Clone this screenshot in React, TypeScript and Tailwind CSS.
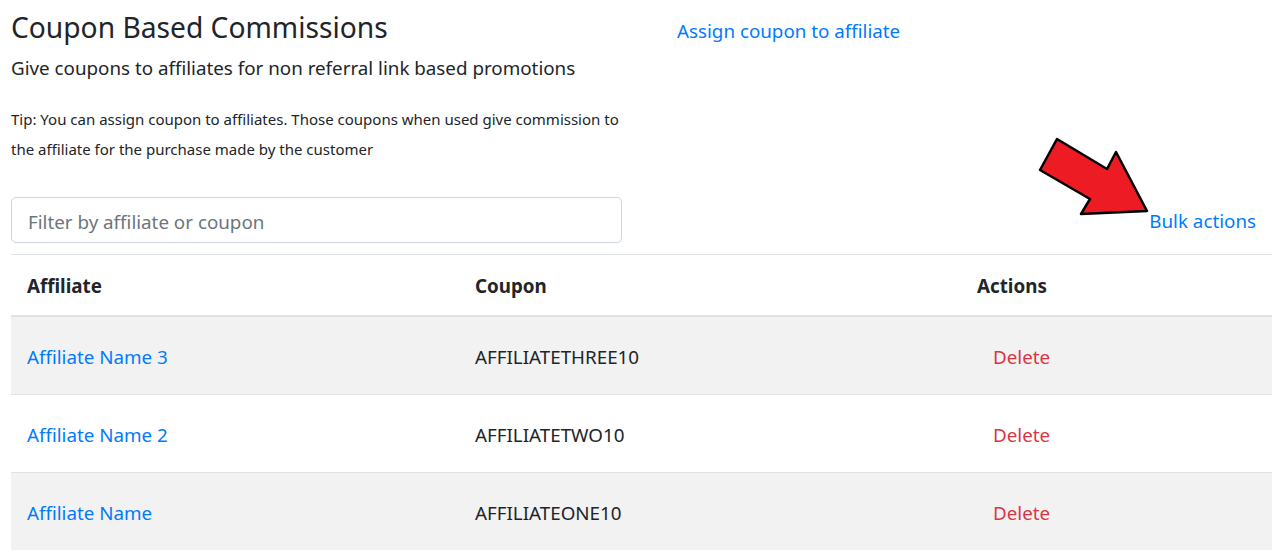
import React, { useState } from "react";

const rows = [
  { name: "Affiliate Name 3", coupon: "AFFILIATETHREE10" },
  { name: "Affiliate Name 2", coupon: "AFFILIATETWO10" },
  { name: "Affiliate Name", coupon: "AFFILIATEONE10" },
];

function Arrow() {
  return (
    <svg
      className="absolute left-[1030px] top-[130px] pointer-events-none"
      width="130"
      height="95"
      viewBox="1030 130 130 95"
    >
      <polygon
        points="1040,170 1057,139 1107,169 1116,152 1147,211 1081,214 1090,199"
        fill="#ed1c24"
        stroke="#000"
        strokeWidth="2.5"
        strokeLinejoin="round"
      />
    </svg>
  );
}

function App() {
  const [filter, setFilter] = useState("");

  const visible = rows.filter(
    (r) =>
      r.name.toLowerCase().includes(filter.toLowerCase()) ||
      r.coupon.toLowerCase().includes(filter.toLowerCase())
  );

  return (
    <div
      className="relative min-h-screen bg-white text-[#212529] px-[11px] pt-[6px]"
      style={{ fontFamily: '"Noto Sans", sans-serif' }}
    >
      <div className="flex">
        <div className="w-[666px]">
          <h3 className="text-[28.2px] leading-[42px] font-normal">Coupon Based Commissions</h3>
          <h5 className="mt-[5px] text-[18.8px] leading-[30px]">
            Give coupons to affiliates for non referral link based promotions
          </h5>
          <p className="mt-[21px] text-[15px] leading-[30px] w-[622px]">
            Tip: You can assign coupon to affiliates. Those coupons when used give commission to
            the affiliate for the purchase made by the customer
          </p>
        </div>
        <div className="pt-[4px]">
          <a href="#" className="text-[#007bff] text-[18.8px] leading-[42px]">
            Assign coupon to affiliate
          </a>
        </div>
      </div>

      <div className="mt-[33px] flex items-center justify-between w-[1261px]">
        <input
          className="w-[611px] h-[46px] border border-[#ced4da] rounded-[5px] px-[16px] pt-[3px] text-[18.8px] placeholder:text-[#6c757d] outline-none"
          placeholder="Filter by affiliate or coupon"
          value={filter}
          onChange={(e) => setFilter(e.target.value)}
        />
        <a href="#" className="text-[#007bff] text-[18.8px] pr-[16px] pt-[3px]">
          Bulk actions
        </a>
      </div>

      <div className="mt-[11px] w-[1261px] text-[18.8px]">
        <div className="flex items-center h-[63px] pt-[3px] border-t border-b-2 border-[#dee2e6] font-bold">
          <div className="w-[448px] pl-[16px]">Affiliate</div>
          <div className="w-[502px] pl-[16px]">Coupon</div>
          <div className="flex-1 pl-[16px]">Actions</div>
        </div>
        {visible.map((r, i) => (
          <div
            key={r.coupon}
            className={
              "flex items-center pt-[3px] " +
              (i === 0 ? "h-[77px] " : "h-[78px] border-t border-[#dee2e6] ") +
              (i % 2 === 0 ? "bg-[#f2f2f2]" : "bg-white")
            }
          >
            <div className="w-[448px] pl-[16px]">
              <a href="#" className="text-[#007bff]">
                {r.name}
              </a>
            </div>
            <div className="w-[502px] pl-[16px]">{r.coupon}</div>
            <div className="flex-1 pl-[32px]">
              <button className="text-[#dc3545]">Delete</button>
            </div>
          </div>
        ))}
      </div>

      <Arrow />
    </div>
  );
}

export default App;
